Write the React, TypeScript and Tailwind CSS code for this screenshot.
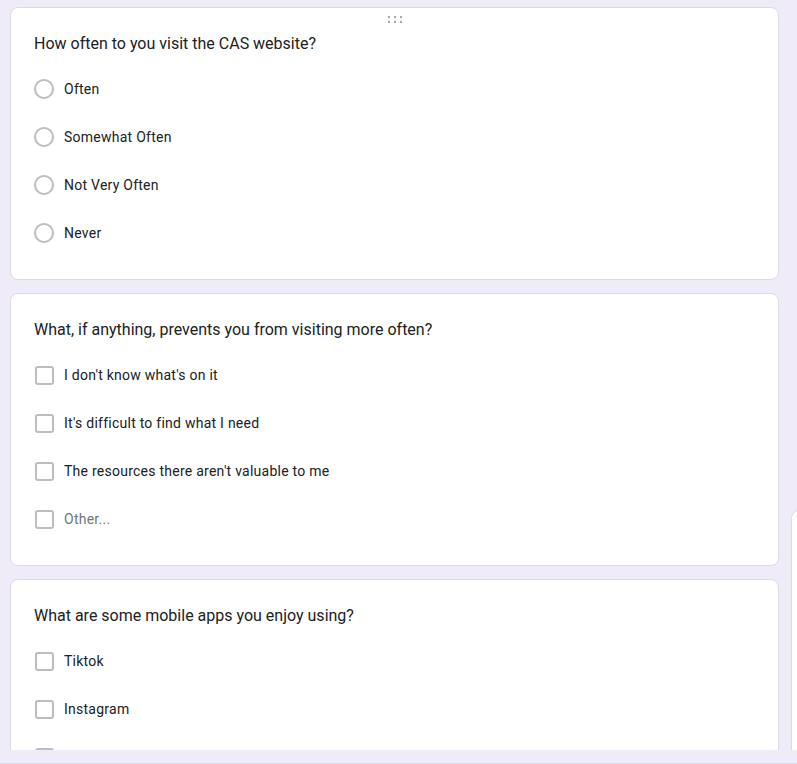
import React from 'react';

type Question = {
  title: string;
  kind: 'radio' | 'checkbox';
  options: { label: string; muted?: boolean }[];
  handle?: boolean;
};

const questions: Question[] = [
  {
    title: 'How often to you visit the CAS website?',
    kind: 'radio',
    handle: true,
    options: [{ label: 'Often' }, { label: 'Somewhat Often' }, { label: 'Not Very Often' }, { label: 'Never' }],
  },
  {
    title: 'What, if anything, prevents you from visiting more often?',
    kind: 'checkbox',
    options: [
      { label: "I don't know what's on it" },
      { label: "It's difficult to find what I need" },
      { label: "The resources there aren't valuable to me" },
      { label: 'Other...', muted: true },
    ],
  },
  {
    title: 'What are some mobile apps you enjoy using?',
    kind: 'checkbox',
    options: [{ label: 'Tiktok' }, { label: 'Instagram' }, { label: 'Snapchat' }, { label: 'Other...', muted: true }],
  },
];

function DragHandle() {
  return (
    <div className="absolute top-[8px] left-1/2 -translate-x-1/2 grid grid-cols-3 gap-x-[4px] gap-y-[3px]">
      {[0, 1, 2, 3, 4, 5].map((i) => (
        <span key={i} className="w-[2px] h-[2px] bg-[#a8a8a8]" />
      ))}
    </div>
  );
}

function QuestionCard({ q }: { q: Question }) {
  return (
    <div className="relative bg-white border border-[#dadce0] rounded-[8px] pt-[24px] pb-[22px] px-[23px]">
      {q.handle && <DragHandle />}
      <div className="text-[16px] leading-[24px] text-[#202124]">{q.title}</div>
      <div className="mt-[9px] flex flex-col">
        {q.options.map((o) => (
          <div key={o.label} className="h-[48px] flex items-center">
            {q.kind === 'radio' ? (
              <span className="w-[20px] h-[20px] rounded-full border-2 border-[#bdbdbd] shrink-0" />
            ) : (
              <span className="ml-[1px] w-[19px] h-[19px] rounded-[3px] border-2 border-[#bdbdbd] shrink-0" />
            )}
            <span
              className={
                'ml-[10px] text-[14px] leading-[20px] tracking-[0.25px] ' +
                (o.muted ? 'text-[#70757a]' : 'text-[#202124]')
              }
            >
              {o.label}
            </span>
          </div>
        ))}
      </div>
    </div>
  );
}

export default function App() {
  return (
    <div className="w-[797px] h-[764px] bg-[#f0ebf8] overflow-hidden flex flex-col" style={{ fontFamily: 'Roboto, "Noto Sans", sans-serif' }}>
      <div className="h-[750px] overflow-hidden flex shrink-0">
        <div className="ml-[10px] w-[769px] pt-[7px] flex flex-col gap-[13px] shrink-0">
          {questions.map((q) => (
            <QuestionCard key={q.title} q={q} />
          ))}
        </div>
        <div className="ml-[12px] mt-[510px] w-[20px] shrink-0 bg-white border border-[#dadce0] rounded-tl-[8px] h-[400px]" />
      </div>
      <div className="flex-1 border-b border-[#dadce0]" />
    </div>
  );
}
